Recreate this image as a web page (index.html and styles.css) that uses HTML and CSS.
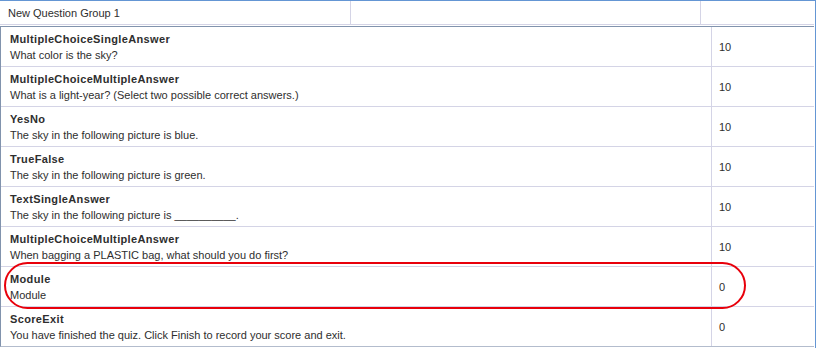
FILE: index.html
```html
<!DOCTYPE html>
<html>
<head>
<meta charset="utf-8">
<link rel="stylesheet" href="styles.css">
</head>
<body>
<div class="frame">
  <div class="head">
    <div class="hcell">New Question Group 1</div>
    <div class="hcell"></div>
    <div class="hcell last"></div>
  </div>
  <div class="grid">
    <div class="row"><div class="q"><div class="t">MultipleChoiceSingleAnswer</div><div class="d">What color is the sky?</div></div><div class="s">10</div></div>
    <div class="row"><div class="q"><div class="t">MultipleChoiceMultipleAnswer</div><div class="d">What is a light-year? (Select two possible correct answers.)</div></div><div class="s">10</div></div>
    <div class="row"><div class="q"><div class="t">YesNo</div><div class="d">The sky in the following picture is blue.</div></div><div class="s">10</div></div>
    <div class="row"><div class="q"><div class="t">TrueFalse</div><div class="d">The sky in the following picture is green.</div></div><div class="s">10</div></div>
    <div class="row"><div class="q"><div class="t">TextSingleAnswer</div><div class="d">The sky in the following picture is __________.</div></div><div class="s">10</div></div>
    <div class="row"><div class="q"><div class="t">MultipleChoiceMultipleAnswer</div><div class="d">When bagging a PLASTIC bag, what should you do first?</div></div><div class="s">10</div></div>
    <div class="row"><div class="q"><div class="t">Module</div><div class="d">Module</div></div><div class="s">0</div></div>
    <div class="row"><div class="q"><div class="t">ScoreExit</div><div class="d">You have finished the quiz. Click Finish to record your score and exit.</div></div><div class="s">0</div></div>
  </div>
  <svg class="mark" width="817" height="348" viewBox="0 0 817 348">
    <rect x="5" y="263" width="740" height="45" rx="22.5" ry="22.5" fill="none" stroke="#e8000b" stroke-width="2"/>
  </svg>
</div>
</body>
</html>
```

FILE: styles.css
```css
html, body {
  margin: 0;
  padding: 0;
  background: #fff;
}
body {
  font-family: "Liberation Sans", Arial, sans-serif;
  font-size: 11px;
  color: #2e2e2e;
}
.frame {
  position: relative;
  width: 815px;
  height: 347px;
  border-top: 1px solid #6496d4;
  border-right: 1px solid #6496d4;
}
.head {
  width: 814px;
  height: 24px;
  box-sizing: border-box;
  display: grid;
  grid-template-columns: 351px 350px 1fr;
  border-bottom: 1px solid #d4d4e6;
  margin-bottom: 1px;
}
.hcell {
  border-right: 1px solid #d4d4e6;
  padding: 4px 8px 0 8px;
  line-height: 16px;
  white-space: nowrap;
}
.hcell.last {
  border-right: none;
}
.grid {
  width: 814px;
  box-sizing: border-box;
  border-left: 1px solid #8193ad;
  border-top: 1px solid #8193ad;
  border-bottom: 1px solid #b3bccd;
}
.row {
  display: grid;
  grid-template-columns: 711px 1fr;
  border-bottom: 1px solid #d4d4e6;
}
.row:last-child {
  border-bottom: none;
}
.q {
  border-right: 1px solid #d4d4e6;
  padding: 4px 9px 3px 9px;
  line-height: 16px;
  white-space: nowrap;
}
.t {
  font-weight: bold;
  letter-spacing: 0.35px;
}
.s {
  display: flex;
  align-items: center;
  padding-left: 7px;
  color: #2e2e2e;
}
.mark {
  position: absolute;
  left: 0;
  top: -1px;
  pointer-events: none;
}
```
